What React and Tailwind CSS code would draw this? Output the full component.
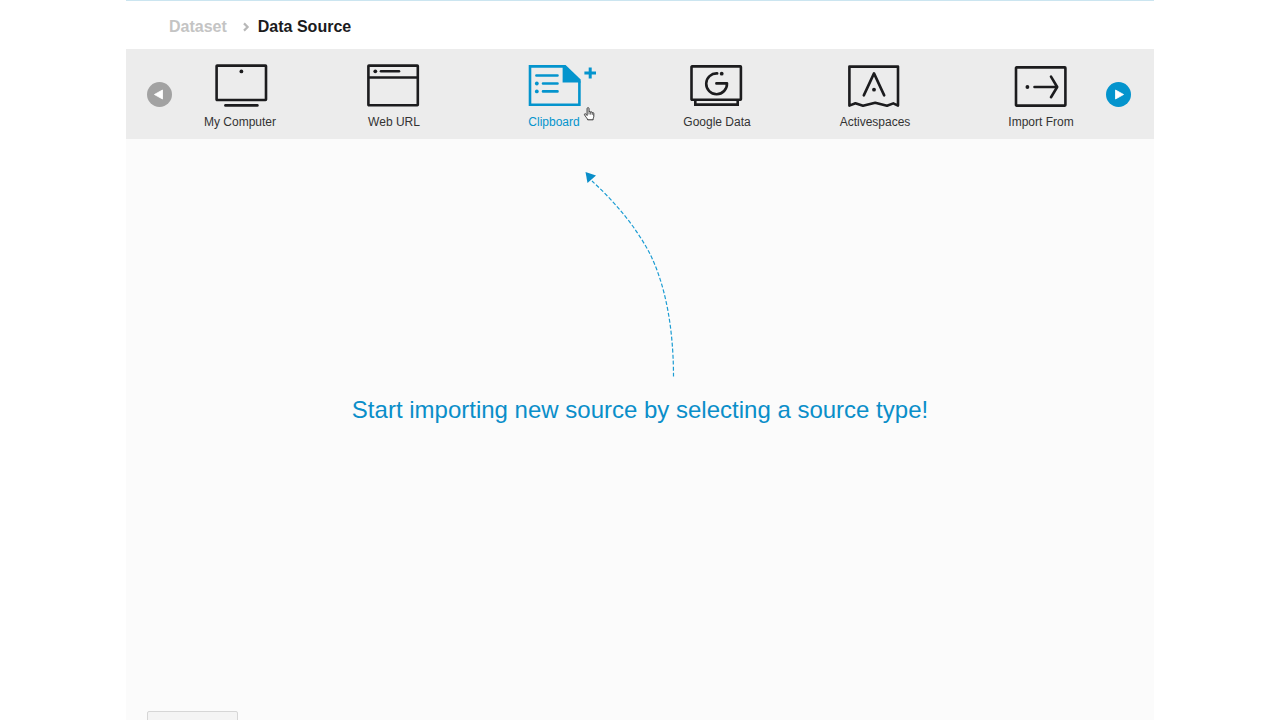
import React from "react";

const stroke = { fill: "none", stroke: "currentColor", strokeWidth: 2.6 };

function Glyph({ children }) {
  return (
    <svg className="h-11 w-14 overflow-visible" viewBox="0 0 56 44" aria-hidden="true" {...stroke}>
      {children}
    </svg>
  );
}

function Dot({ x, y, r = 1.9 }) {
  return <circle cx={x} cy={y} r={r} fill="currentColor" stroke="none" />;
}

const ComputerIcon = () => (
  <Glyph>
    <rect x="4.6" y="1.6" width="49.4" height="34.4" rx="0.5" />
    <path d="M13.4 41.4H45.4" strokeLinecap="round" />
    <Dot x={29.4} y={7.4} />
  </Glyph>
);

const WebIcon = () => (
  <Glyph>
    <rect x="2.4" y="1.6" width="49.4" height="39.6" rx="0.5" />
    <path d="M2.4 13.5H51.8" />
    <path d="M15 7.3H33" strokeLinecap="round" />
    <Dot x={9.3} y={7.3} />
  </Glyph>
);

const ClipboardIcon = () => (
  <Glyph>
    <path d="M37.5 2.4H4V40.7H53.4V17.5" />
    <path d="M36.6 1.1H39.6L54.7 15.6V18.4H36.6Z" fill="currentColor" stroke="none" />
    <path d="M10.4 11.5H31.5M17 19.5H31.5M17 27.4H31.5" strokeLinecap="round" />
    <Dot x={10.8} y={19.5} />
    <Dot x={10.8} y={27.4} />
    <path d="M58.4 9H70M64.2 3.4V14.6" strokeWidth="3" />
  </Glyph>
);

const GoogleIcon = () => (
  <Glyph>
    <rect x="2.5" y="2.4" width="49.4" height="33.4" rx="0.5" />
    <path d="M6.3 36V40.6H48.7V36" />
    <path d="M28.2 9.4A10.4 10.4 0 1 0 38 19.4H27.4" strokeLinecap="round" strokeLinejoin="round" />
    <Dot x={32.7} y={9.7} />
  </Glyph>
);

const ActivespacesIcon = () => (
  <Glyph>
    <path d="M2.4 2.6H51V41.6L46.3 39.4L40 41.8L28.2 38.8L16 41.8L8.4 39.2L2.4 41.6Z" strokeLinejoin="round" />
    <path d="M16.8 31.4L27 9.4L37.2 31.4" strokeLinecap="round" strokeLinejoin="round" />
    <Dot x={27} y={25.7} />
  </Glyph>
);

const ImportIcon = () => (
  <Glyph>
    <rect x="3" y="3.4" width="49.4" height="38.2" rx="0.5" />
    <path d="M21.5 23H44M38 12.6L44.2 23L38 33.2" strokeLinecap="round" strokeLinejoin="round" />
    <Dot x={14.4} y={23} />
  </Glyph>
);

const sources = [
  { label: "My Computer", Icon: ComputerIcon },
  { label: "Web URL", Icon: WebIcon },
  { label: "Clipboard", Icon: ClipboardIcon, active: true },
  { label: "Google Data", Icon: GoogleIcon },
  { label: "Activespaces", Icon: ActivespacesIcon },
  { label: "Import From", Icon: ImportIcon },
];

function HandPointer() {
  return (
    <svg
      className="pointer-events-none absolute left-full top-[43px] ml-0.5 h-3.5 w-2.5 overflow-visible text-[#333333]"
      viewBox="0 0 10 14"
      aria-hidden="true"
    >
      <path
        d="M3.1 8.5V1.6C3.1 .3 5 .3 5 1.6V4.9C5.3 4.2 6.6 4.3 6.7 5.3C7 4.6 8.2 4.8 8.3 5.8C8.7 5.2 9.8 5.5 9.8 6.5V9.4C9.8 10.4 9.1 11 9.1 12.8H3.7C3.3 11.2 1.6 10 .5 7.7C.1 6.8 1.3 6.3 2 7.2Z"
        fill="white"
        stroke="currentColor"
        strokeWidth="1"
        strokeLinejoin="round"
      />
      <path d="M5 4.9V7.5M6.7 5.3V7.6M8.3 5.8V7.8" stroke="currentColor" strokeWidth="0.8" />
    </svg>
  );
}

function ScrollButton({ label, points, color }) {
  return (
    <button type="button" aria-label={label} className={`size-[25px] shrink-0 rounded-full ${color}`}>
      <svg viewBox="0 0 25 25" className="size-full" aria-hidden="true">
        <polygon points={points} fill="white" stroke="white" strokeWidth="0.8" strokeLinejoin="round" />
      </svg>
    </button>
  );
}

export default function App() {
  return (
    <div className="h-screen overflow-hidden bg-white font-['Liberation_Sans',Arial,sans-serif]">
      <div className="mx-auto flex min-h-full max-w-[1028px] flex-col bg-[#fbfbfb]">
        <nav
          aria-label="Breadcrumb"
          className="flex h-[49px] items-center border-t border-[#cbe5f0] bg-white px-[43px] pt-1 text-base font-bold"
        >
          <a href="#dataset" className="text-[#c4c4c4]">Dataset</a>
          <svg className="ml-[15px] mr-2 h-2.5 w-2" viewBox="0 0 8 10" fill="none" stroke="#b8b8b8" strokeWidth="2.2" aria-hidden="true">
            <path d="M2 1.4L5.6 5L2 8.6" />
          </svg>
          <span aria-current="page" className="text-[#1b1b1d]">Data Source</span>
        </nav>

        <div className="flex h-[90px] items-center gap-0.5 bg-[#ececec] pl-[21px] pr-[23px]">
          <ScrollButton label="Previous sources" points="7.4,12.5 15.5,8 15.5,17" color="bg-[#a2a2a2]" />
          <div className="grid flex-1 grid-cols-[132fr_104fr_144fr_110fr_134fr_126fr] gap-9 pt-1.5">
            {sources.map(({ label, Icon, active }) => (
              <button
                key={label}
                type="button"
                className={`flex flex-col items-center ${active ? "text-[#0494cd]" : "text-[#1c1c1e]"}`}
              >
                <span className="relative flex flex-col items-center gap-1.5">
                  <Icon />
                  <span className={`text-xs ${active ? "" : "text-[#333333]"}`}>{label}</span>
                  {active && <HandPointer />}
                </span>
              </button>
            ))}
          </div>
          <ScrollButton label="More sources" points="9.5,8 17.6,12.5 9.5,17" color="bg-[#0494cd]" />
        </div>

        <main className="flex min-h-[calc(100vh-148px)] flex-col items-center gap-[15px] pt-8">
          <svg className="h-[208px] w-[116px]" viewBox="0 0 116 208" aria-hidden="true">
            <path
              d="M91.5 205.5C91.5 174 88 122 67 81C53 55 33 31 10 10"
              fill="none"
              stroke="#1b9cd3"
              strokeWidth="1.2"
              strokeDasharray="4 2"
            />
            <polygon points="3.5,1 14,4.5 5.5,12" fill="#0a8ec9" />
          </svg>
          <h1 className="text-2xl text-[#0a8ec9]">Start importing new source by selecting a source type!</h1>
        </main>

        <footer className="px-[21px]">
          <button
            type="button"
            aria-label="Cancel"
            className="h-8 w-[91px] rounded-xs border border-[#d6d6d6] bg-[#f4f4f4]"
          />
        </footer>
      </div>
    </div>
  );
}
